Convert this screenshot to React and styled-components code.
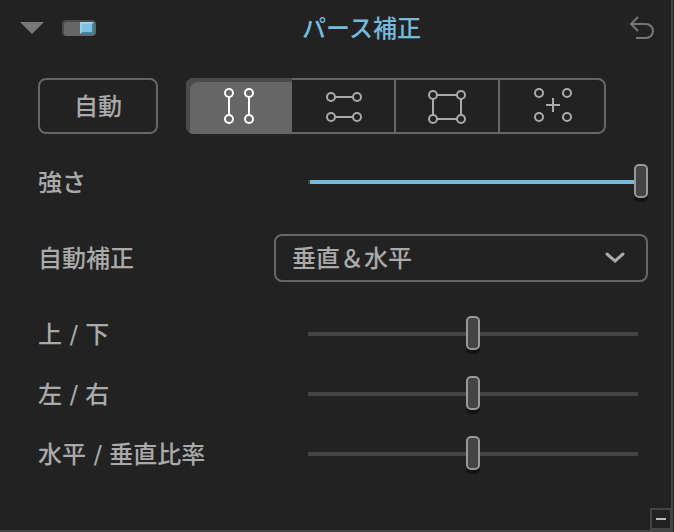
import React, { useState } from "react";
import styled, { createGlobalStyle } from "styled-components";

const colors = {
	panel: "#222222",
	line: "#666666",
	edge: "#444444",
	text: "#aaaaaa",
	accent: "#75bbdd"
};

const GlobalStyle = createGlobalStyle`
	*, *::before {
		box-sizing: border-box;
	}
	body {
		margin: 0;
		background: ${colors.panel};
	}
	body, button, select, input {
		font-family: "DejaVu Sans", "Noto Sans CJK JP", sans-serif;
		font-size: 24px;
		font-weight: 500;
		line-height: 36px;
		color: ${colors.text};
	}
	button {
		padding: 0;
		border: 0;
		background: none;
		cursor: pointer;
	}
`;

const Panel = styled.section`
	display: flex;
	flex-direction: column;
	min-height: 100vh;
	margin-right: 1px;
	border: solid ${colors.edge};
	border-width: 0 2px 2px 0;
	background: ${colors.panel};
`;

const Header = styled.header`
	display: grid;
	grid-template-columns: 1fr auto 1fr;
	align-items: center;
	height: 56px;
	padding: 0 16px 0 20px;
`;

const HeaderControls = styled.div`
	display: flex;
	align-items: center;
	gap: 18px;
`;

const Title = styled.h2`
	margin: 0;
	padding: 2px 0 0 48px;
	font-size: 24px;
	font-weight: 500;
	color: ${colors.accent};
`;

const IconButton = styled.button`
	display: flex;
	justify-self: ${props => props.$align || "start"};
`;

const Toggle = styled.input`
	appearance: none;
	display: flex;
	justify-content: flex-start;
	width: 34px;
	height: 16px;
	margin: 0;
	padding: 0 2px;
	border: solid #4a4a4a;
	border-width: 2px 0 0 2px;
	border-radius: 4px;
	background: ${colors.line};
	cursor: pointer;

	&::before {
		content: "";
		width: 14px;
		height: 12px;
		background: #888888;
	}
	&:checked {
		justify-content: flex-end;
	}
	&:checked::before {
		background: #7fc1e0;
		border: 2px solid;
		border-color: #93d3ec #4584a1 #4584a1 #93d3ec;
	}
`;

const Body = styled.div`
	flex: 1;
	padding: 22px 23px 0 38px;
`;

const Modes = styled.div`
	display: flex;
	gap: 28px;
	margin-bottom: 18px;
`;

const AutoButton = styled.button`
	width: 120px;
	height: 56px;
	padding-top: 2px;
	border: 2px solid ${colors.line};
	border-radius: 8px;
`;

const Segments = styled.div`
	display: grid;
	grid-template-columns: repeat(4, 1fr);
	flex: 0 1 420px;
	height: 56px;
	border: 2px solid ${colors.line};
	border-radius: 8px;
`;

const Segment = styled.button`
	display: flex;
	align-items: center;
	justify-content: center;
	border-right: 2px solid ${colors.line};

	&:last-child {
		border-right: 0;
	}
	&[aria-pressed="true"] {
		margin: -2px 0;
		border-right: 0;
		color: #ffffff;
		background: ${colors.line};
		box-shadow: inset 4px 4px 0 #4a4a4a;
	}
	&[aria-pressed="true"]:first-child {
		margin-left: -2px;
		border-radius: 8px 0 0 8px;
	}
`;

const Row = styled.div`
	display: flex;
	align-items: center;
	justify-content: space-between;
	height: 60px;
	margin-bottom: ${props => (props.$spaced ? "16px" : "0")};
`;

const Label = styled.label`
	padding-top: 2px;
`;

const SelectBox = styled.div`
	display: grid;
	align-items: center;
	flex: 0 1 374px;

	> * {
		grid-area: 1 / 1;
	}
	svg {
		justify-self: end;
		margin-right: 23px;
		pointer-events: none;
	}
`;

const Select = styled.select`
	appearance: none;
	width: 100%;
	height: 48px;
	padding: 2px 48px 0 16px;
	border: 2px solid ${colors.line};
	border-radius: 8px;
	background: ${colors.panel};
`;

const Range = styled.input`
	appearance: none;
	flex: 0 1 350px;
	min-width: 0;
	height: 44px;
	margin: 0;
	background: linear-gradient(
			90deg,
			${colors.edge} 2px,
			${props => (props.$filled ? colors.accent : colors.edge)} 2px
		)
		center / calc(100% - 20px) 4px no-repeat;

	&::-webkit-slider-thumb {
		appearance: none;
		width: 14px;
		height: 34px;
		margin-top: -2px;
		border: 2px solid #999999;
		border-radius: 5px;
		background: #444444;
		box-shadow: 0 4px 0 #141414;
	}
`;

const Footer = styled.footer`
	display: flex;
	justify-content: flex-end;
`;

const CollapseButton = styled.button`
	display: flex;
	align-items: center;
	justify-content: center;
	width: 21px;
	height: 22px;
	border: solid ${colors.edge};
	border-width: 2px 1px 2px 2px;
`;

const Glyph = ({ children, color = "currentColor", ...rest }) => (
	<svg fill="none" stroke={color} strokeWidth="2" aria-hidden="true" {...rest}>
		{children}
	</svg>
);

const Dots = ({ points }) =>
	points.map(([x, y]) => <circle key={`${x}-${y}`} cx={x} cy={y} r="4" />);

const modes = [
	{
		id: "vertical",
		label: "垂直",
		points: [[10, 7], [30, 7], [10, 33], [30, 33]],
		lines: "M10 11V29M30 11V29"
	},
	{
		id: "horizontal",
		label: "水平",
		points: [[8, 11], [34, 11], [8, 31], [34, 31]],
		lines: "M12 11H30M12 31H30"
	},
	{
		id: "rectangle",
		label: "四角形",
		points: [[6, 9], [34, 9], [6, 33], [34, 33]],
		lines: "M10 9H30M10 33H30M6 13V29M34 13V29"
	},
	{
		id: "free",
		label: "フリー",
		points: [[7, 7], [35, 7], [7, 31], [35, 31]],
		lines: "M14 19H28M21 12V26"
	}
];

const SliderRow = ({ id, label, value, min = -100, filled, spaced, onChange }) => (
	<Row $spaced={spaced}>
		<Label htmlFor={id}>{label}</Label>
		<Range
			id={id}
			type="range"
			min={min}
			max="100"
			value={value}
			$filled={filled}
			onChange={e => onChange(id, Number(e.target.value))}
		/>
	</Row>
);

export default function App() {
	const [enabled, setEnabled] = useState(true);
	const [mode, setMode] = useState("vertical");
	const [correction, setCorrection] = useState("both");
	const [values, setValues] = useState({
		strength: 100,
		upDown: 0,
		leftRight: 0,
		ratio: 0
	});

	const setValue = (id, value) => setValues({ ...values, [id]: value });

	return (
		<>
			<GlobalStyle />
			<Panel>
				<Header>
					<HeaderControls>
						<IconButton aria-label="折りたたむ">
							<svg width="24" height="12" aria-hidden="true">
								<path d="M0 0H24L12 12Z" fill="#777777" />
							</svg>
						</IconButton>
						<Toggle
							type="checkbox"
							aria-label="パース補正"
							checked={enabled}
							onChange={e => setEnabled(e.target.checked)}
						/>
					</HeaderControls>
					<Title>パース補正</Title>
					<IconButton $align="end" aria-label="リセット">
						<Glyph width="26" height="24" color="#777777">
							<path d="M9 1L2 8L9 15M2 8H17A7 7 0 0 1 17 22H7" />
						</Glyph>
					</IconButton>
				</Header>

				<Body>
					<Modes>
						<AutoButton>自動</AutoButton>
						<Segments>
							{modes.map(m => (
								<Segment
									key={m.id}
									aria-label={m.label}
									aria-pressed={mode === m.id}
									onClick={() => setMode(m.id)}
								>
									<Glyph width="40" height="40">
										<Dots points={m.points} />
										<path d={m.lines} />
									</Glyph>
								</Segment>
							))}
						</Segments>
					</Modes>

					<SliderRow
						id="strength"
						label="強さ"
						min={0}
						value={values.strength}
						filled
						spaced
						onChange={setValue}
					/>
					<Row $spaced>
						<Label htmlFor="correction">自動補正</Label>
						<SelectBox>
							<Select
								id="correction"
								value={correction}
								onChange={e => setCorrection(e.target.value)}
							>
								<option value="both">垂直＆水平</option>
								<option value="vertical">垂直</option>
								<option value="horizontal">水平</option>
							</Select>
							<Glyph width="20" height="12" strokeWidth="3" strokeLinecap="round">
								<path d="M2 2L10 9L18 2" />
							</Glyph>
						</SelectBox>
					</Row>
					<SliderRow
						id="upDown"
						label="上 / 下"
						value={values.upDown}
						onChange={setValue}
					/>
					<SliderRow
						id="leftRight"
						label="左 / 右"
						value={values.leftRight}
						onChange={setValue}
					/>
					<SliderRow
						id="ratio"
						label="水平 / 垂直比率"
						value={values.ratio}
						onChange={setValue}
					/>
				</Body>

				<Footer>
					<CollapseButton aria-label="最小化">
						<svg width="10" height="2" aria-hidden="true">
							<rect width="10" height="2" fill="#bbbbbb" />
						</svg>
					</CollapseButton>
				</Footer>
			</Panel>
		</>
	);
}
